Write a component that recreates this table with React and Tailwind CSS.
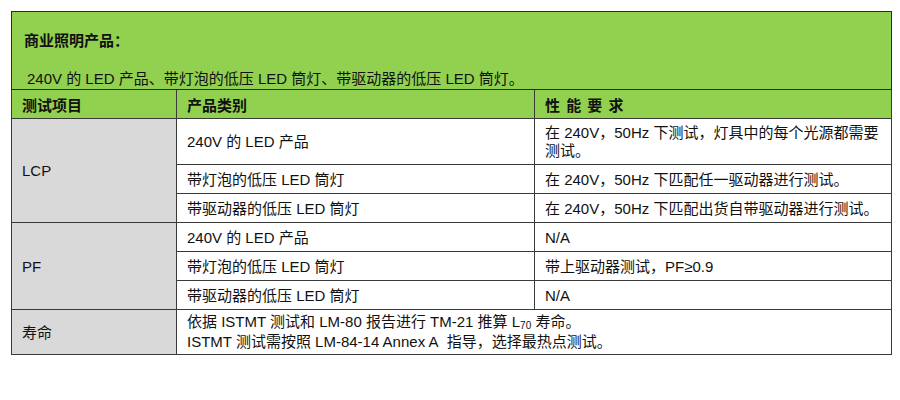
const FONT = '"Liberation Sans", Arial, "Noto Sans CJK SC", sans-serif'

const cell = 'border border-[#3a3a3a] px-[10px] align-middle'
const firstCol = `${cell} bg-[#d9d9d9]`

function App() {
  return (
    <div className="w-[900px] h-[400px] bg-white pt-[11px] pl-[11px]" style={{ fontFamily: FONT }}>
      <table className="table-fixed border-collapse text-[15px] leading-[19px] text-[#111]">
        <colgroup>
          <col className="w-[165px]" />
          <col className="w-[358px]" />
          <col className="w-[357px]" />
        </colgroup>
        <tbody>
          {/* Green intro block */}
          <tr className="h-[78px]">
            <td colSpan={3} className="border border-[#2a2a2a] bg-[#92d050] px-[12px] pt-[19px] pb-0 align-top">
              <p className="font-bold">商业照明产品：</p>
              <p className="mt-[19px] pl-[3px]">240V 的 LED 产品、带灯泡的低压 LED 筒灯、带驱动器的低压 LED 筒灯。</p>
            </td>
          </tr>

          {/* Column headings */}
          <tr className="h-[29px] bg-[#92d050] font-bold">
            <td className={`${cell} pt-[3px]`}>测试项目</td>
            <td className={`${cell} pt-[3px]`}>产品类别</td>
            <td className={`${cell} pt-[3px] tracking-[1px]`}>性 能 要 求</td>
          </tr>

          {/* LCP */}
          <tr className="h-[46px]">
            <td rowSpan={3} className={firstCol}>LCP</td>
            <td className={cell}>240V 的 LED 产品</td>
            <td className={`${cell} pr-[6px] leading-[18px]`}>在 240V，50Hz 下测试，灯具中的每个光源都需要测试。</td>
          </tr>
          <tr className="h-[29px]">
            <td className={cell}>带灯泡的低压 LED 筒灯</td>
            <td className={cell}>在 240V，50Hz 下匹配任一驱动器进行测试。</td>
          </tr>
          <tr className="h-[29px]">
            <td className={cell}>带驱动器的低压 LED 筒灯</td>
            <td className={cell}>在 240V，50Hz 下匹配出货自带驱动器进行测试。</td>
          </tr>

          {/* PF */}
          <tr className="h-[29px]">
            <td rowSpan={3} className={firstCol}>PF</td>
            <td className={cell}>240V 的 LED 产品</td>
            <td className={cell}>N/A</td>
          </tr>
          <tr className="h-[29px]">
            <td className={cell}>带灯泡的低压 LED 筒灯</td>
            <td className={cell}>带上驱动器测试，PF≥0.9</td>
          </tr>
          <tr className="h-[29px]">
            <td className={cell}>带驱动器的低压 LED 筒灯</td>
            <td className={cell}>N/A</td>
          </tr>

          {/* Lifetime */}
          <tr className="h-[45px]">
            <td className={firstCol}>寿命</td>
            <td colSpan={2} className={`${cell} leading-[20px]`}>
              <p>
                依据 ISTMT 测试和 LM-80 报告进行 TM-21 推算 L<sub className="text-[10px] align-baseline relative top-[2px]">70</sub> 寿命。
              </p>
              <p>ISTMT 测试需按照 LM-84-14 Annex A&nbsp; 指导，选择最热点测试。</p>
            </td>
          </tr>
        </tbody>
      </table>
    </div>
  )
}

export default App
